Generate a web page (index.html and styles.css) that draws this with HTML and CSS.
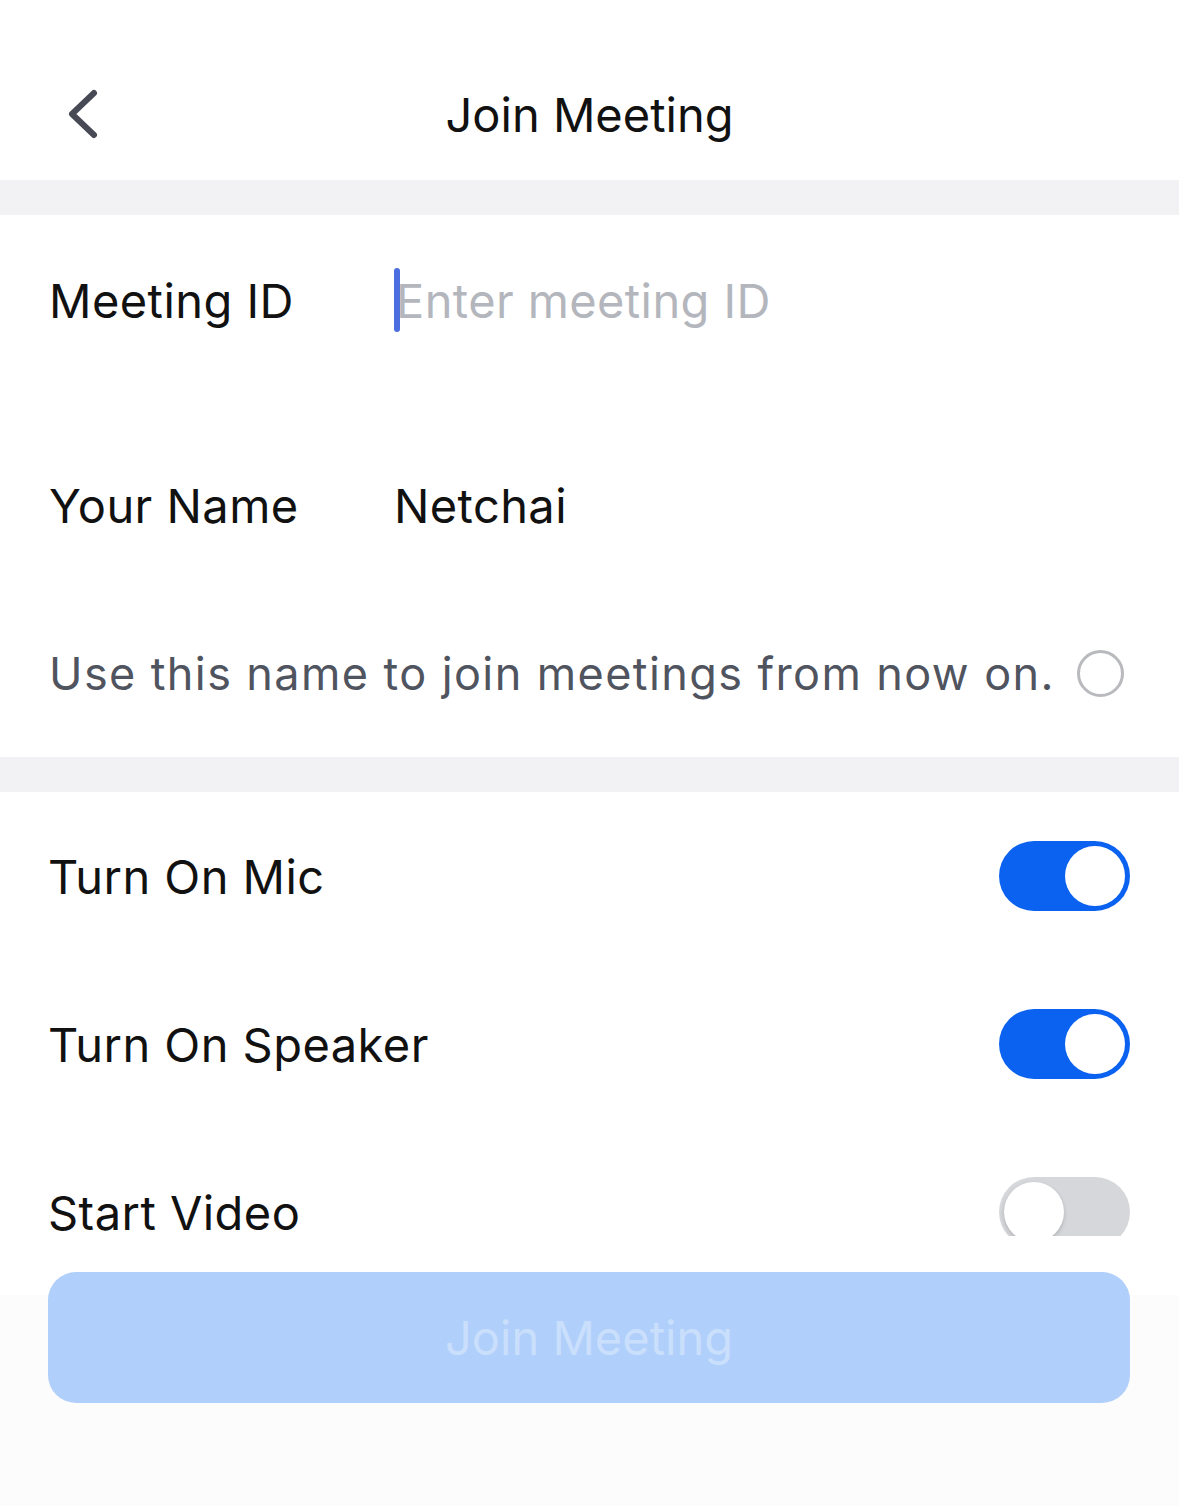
FILE: index.html
```html
<!DOCTYPE html>
<html>
<head>
<meta charset="utf-8">
<link rel="stylesheet" href="styles.css">
</head>
<body>
<div class="screen">
  <header class="topbar">
    <svg class="back" width="60" height="60" viewBox="0 0 60 60"><path d="M43 12 L21 33 L43 54" fill="none" stroke="#474a55" stroke-width="6" stroke-linecap="round" stroke-linejoin="round"/></svg>
    <h1 class="title">Join Meeting</h1>
  </header>
  <div class="band"></div>
  <section class="group">
    <div class="row row-id">
      <span class="label">Meeting ID</span>
      <span class="field"><span class="caret"></span><span class="placeholder">Enter meeting ID</span></span>
    </div>
    <div class="row row-name">
      <span class="label">Your Name</span>
      <span class="field value">Netchai</span>
    </div>
    <div class="row row-remember">
      <span class="hint">Use this name to join meetings from now on.</span>
      <span class="radio"></span>
    </div>
  </section>
  <div class="band"></div>
  <section class="toggles">
    <div class="trow"><span class="label">Turn On Mic</span><span class="switch on"><span class="knob"></span></span></div>
    <div class="trow"><span class="label">Turn On Speaker</span><span class="switch on"><span class="knob"></span></span></div>
    <div class="trow"><span class="label">Start Video</span><span class="switch cut"><span class="knob"></span></span></div>
  </section>
  <footer class="footer">
    <button class="join">Join Meeting</button>
  </footer>
</div>
</body>
</html>
```
FILE: styles.css
```css
* { box-sizing: border-box; }
html, body { margin: 0; padding: 0; background: #fff; }
body { font-family: Inter, "Noto Sans", sans-serif; color: #111; }
.screen { width: 1179px; height: 1506px; overflow: hidden; display: flex; flex-direction: column; }
.topbar { height: 180px; position: relative; display: flex; align-items: center; justify-content: center; }
.back { position: absolute; left: 51px; top: 81px; }
.title { margin: 0; font-size: 47px; font-weight: 400; color: #111; padding-top: 48px; }
.band { height: 35px; background: #f2f2f4; flex: none; }
.group { display: flex; flex-direction: column; }
.row { display: flex; align-items: center; padding: 0 49px; }
.row-id { height: 170px; }
.row-name { height: 170px; margin-top: 35px; }
.row-remember { height: 167px; justify-content: space-between; padding-right: 55px; }
.label { font-size: 47px; letter-spacing: 0.45px; width: 345px; flex: none; color: #111; }
.field { display: flex; align-items: center; font-size: 47px; letter-spacing: 0.4px; }
.caret { width: 6px; height: 64px; background: #4a6ee0; border-radius: 3px; margin-right: -4px; }
.placeholder { color: #b4b6bd; }
.value { color: #111; }
.hint { font-size: 45px; color: #50545f; letter-spacing: 1.4px; }
.radio { width: 47px; height: 47px; border: 3px solid #b9babe; border-radius: 50%; flex: none; }
.toggles { height: 444px; flex: none; }
.trow { height: 168px; display: flex; align-items: center; justify-content: space-between; padding: 0 49px 0 48px; }
.trow .label { width: auto; }
.switch { width: 131px; height: 70px; border-radius: 35px; background: #d6d7db; position: relative; flex: none; }
.switch.on { background: #0b62f0; }
.switch.cut { clip-path: inset(-6px -6px 11px -6px); }
.knob { position: absolute; top: 5px; left: 5px; width: 60px; height: 60px; border-radius: 50%; background: #fff; box-shadow: 0 2px 4px rgba(0,0,0,0.18); }
.switch.on .knob { left: 66px; box-shadow: none; }
.footer { flex: 1; background: linear-gradient(#fff 59px, #fcfcfc 59px); padding: 36px 49px 0 48px; }
.join { width: 100%; height: 131px; border: 0; border-radius: 28px; background: #b0cffa; color: #cadffc; font-family: Inter, "Noto Sans", sans-serif; font-size: 47px; font-weight: 400; padding: 0; }
```
